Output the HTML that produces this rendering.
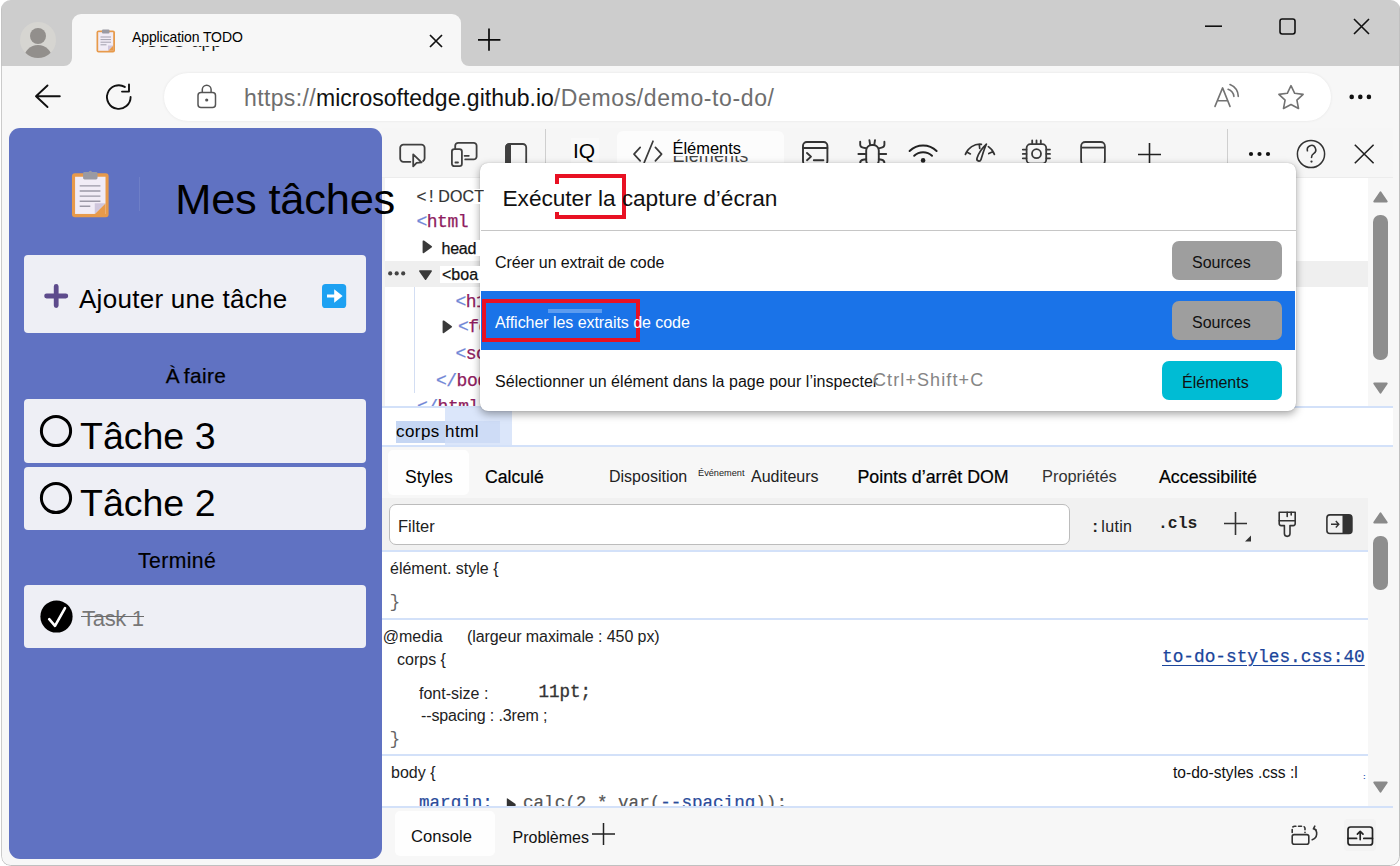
<!DOCTYPE html>
<html><head><meta charset="utf-8">
<style>
*{box-sizing:border-box;margin:0;padding:0}
html,body{width:1400px;height:866px;overflow:hidden;background:#fff;font-family:"Liberation Sans",sans-serif;color:#000}
#win{position:absolute;left:0;top:0;width:1400px;height:866px;background:#f7f7f7;clip-path:inset(0px 0px 0px 1.2px round 9.5px)}
#win>div,#win>span{position:absolute}
.t{position:absolute;white-space:nowrap;line-height:1}
svg{position:absolute;overflow:visible}
.card{background:#eeeff5;border-radius:4px}
.hl{height:2px;background:#d3e1f9}
.mono{font-family:"Liberation Mono",monospace}
</style></head><body>
<div id="win">
<!--frame-->
<div style="left:0;top:0;width:1400px;height:65.500px;background:#cdcdcd"></div>
<div style="left:72px;top:14.300px;width:389px;height:52px;background:#f7f7f7;border-radius:9px 9px 0 0"></div>
<svg style="left:64px;top:57.500px" width="8" height="8"><path d="M8 0 V8 H0 A8 8 0 0 0 8 0Z" fill="#f7f7f7"/></svg>
<svg style="left:461px;top:57.500px" width="8" height="8"><path d="M0 0 V8 H8 A8 8 0 0 1 0 0Z" fill="#f7f7f7"/></svg>
<!-- avatar -->
<svg style="left:20px;top:22px" width="36" height="36" viewBox="0 0 36 36"><defs><clipPath id="avc"><circle cx="18" cy="18" r="18"/></clipPath></defs><circle cx="18" cy="18" r="18" fill="#d6d5d1"/><g clip-path="url(#avc)" fill="#928f8c"><circle cx="18" cy="14" r="8"/><ellipse cx="18" cy="36.5" rx="14" ry="13.5"/></g></svg>
<!-- favicon clipboard -->
<svg style="left:96px;top:28.500px" width="20" height="24" viewBox="0 0 20 24"><rect x="0.5" y="1.5" width="18.5" height="22" rx="2" fill="#e79a4b"/><rect x="2.2" y="3.2" width="15" height="18.6" fill="#f1ecf6"/><path d="M17.2 16.5 V21.8 H12z" fill="#e79a4b"/><path d="M12 16.5h5.2L12 21.8z" fill="#cfc6dc"/><rect x="6" y="0.5" width="7.5" height="4" rx="1" fill="#9a9aa3"/><g stroke="#9b98a6" stroke-width="0.9"><path d="M4.5 8h10.5M4.5 10.6h10.5M4.5 13.2h10.5M4.5 15.8h6"/></g></svg>
<div class="t" style="left:134.500px;top:33.300px;font-size:17.600px;letter-spacing:.3px;color:#222">TODO app</div>
<div class="t" id="tabt" style="left:130px;top:27px;width:100px;height:18.700px;background:#f7f7f7;font-size:14px;letter-spacing:-.1px"><span style="position:absolute;left:2px;top:3px">Application TODO</span></div>
<svg style="left:429px;top:34px" width="14" height="14" viewBox="0 0 14 14"><path d="M1 1L13 13M13 1L1 13" stroke="#111" stroke-width="1.7"/></svg>
<svg style="left:477px;top:28px" width="24" height="24" viewBox="0 0 24 24"><path d="M12 .6V22.800M1 11.800H23.400" stroke="#0a0a0a" stroke-width="1.700"/></svg>
<!-- window controls -->
<svg style="left:1205px;top:25px" width="18" height="3"><path d="M0 1.2H17" stroke="#111" stroke-width="1.6"/></svg>
<svg style="left:1279px;top:18px" width="18" height="18"><rect x="1" y="1" width="15" height="15" rx="2.2" fill="none" stroke="#111" stroke-width="1.6"/></svg>
<svg style="left:1353px;top:18px" width="18" height="18"><path d="M1 1L16 16M16 1L1 16" stroke="#111" stroke-width="1.6"/></svg>
<!-- toolbar -->
<svg style="left:34px;top:84px" width="28" height="24" viewBox="0 0 28 24"><path d="M13.500 1.500L2 12.200L13.500 23M2 12.200H25.800" fill="none" stroke="#111" stroke-width="1.9" stroke-linecap="round" stroke-linejoin="round"/></svg>
<svg style="left:105px;top:83px" width="28" height="28" viewBox="0 0 28 28"><path d="M25.6 14 A11.8 11.8 0 1 1 19.8 3.9" fill="none" stroke="#111" stroke-width="1.9" stroke-linecap="round"/><path d="M24 1.5V8.6H17" fill="none" stroke="#111" stroke-width="1.9" stroke-linecap="round" stroke-linejoin="round"/></svg>
<div style="left:164px;top:73px;width:1167px;height:48px;border-radius:24px;background:#fff;box-shadow:0 0 3px rgba(0,0,0,.08)"></div>
<svg style="left:197px;top:84px" width="20" height="25" viewBox="0 0 20 25"><rect x="1" y="8.5" width="17.5" height="15" rx="3" fill="none" stroke="#555" stroke-width="1.5"/><path d="M5.3 8.5V5.6a4.4 4.4 0 0 1 8.8 0V8.5" fill="none" stroke="#555" stroke-width="1.5"/><circle cx="9.7" cy="16" r="1.6" fill="#555"/></svg>
<div class="t" id="url" style="left:244px;top:87px;font-size:23px;color:#6e6e6e"><span style="letter-spacing:.37px">https://</span><span style="color:#111">microsoftedge.github.io</span><span style="letter-spacing:.62px">/Demos/demo-to-do/</span></div>
<!-- read aloud -->
<svg style="left:1210px;top:80px" width="32" height="30" viewBox="0 0 32 30" fill="none" stroke="#737373" stroke-width="1.600" stroke-linecap="round" stroke-linejoin="round"><path d="M5 26.400L12.600 7.900L20 26.400M7.400 20.700H17.900"/><path d="M18.100 9.300A8.600 8.600 0 0 1 23.900 16.400M20 4.600A13.600 13.600 0 0 1 28.300 16.400"/></svg>
<svg style="left:1277px;top:84px" width="28" height="27" viewBox="0 0 28 27"><path d="M14 1.600l3.700 7.700 8.400 1.100-6.200 5.800 1.600 8.300L14 20.500 6.500 24.500l1.600-8.300-6.200-5.800 8.400-1.100z" fill="none" stroke="#737373" stroke-width="1.600" stroke-linejoin="round"/></svg>
<svg style="left:1349px;top:94px" width="24" height="6"><circle cx="2.700" cy="2.900" r="2.300" fill="#111"/><circle cx="11.300" cy="2.900" r="2.300" fill="#111"/><circle cx="19.900" cy="2.900" r="2.300" fill="#111"/></svg>
<!--page-->
<div style="left:9px;top:128px;width:373px;height:731px;background:#6072c2;border-radius:11px"></div>
<!-- big clipboard -->
<svg style="left:71.300px;top:170px" width="38.600" height="48.200" viewBox="0 0 40 50"><rect x="1" y="3.5" width="38" height="45.5" rx="3" fill="#e79a4b"/><rect x="4.2" y="7" width="31.6" height="38.6" fill="#f1ecf6"/><path d="M35.8 34.5V45.6H24.6z" fill="#e79a4b"/><path d="M24.6 34.5H35.8L24.6 45.6z" fill="#cfc6dc"/><rect x="12.5" y="2.2" width="15" height="7.6" rx="1.5" fill="#9a9aa3"/><circle cx="20" cy="2.6" r="1.8" fill="#9a9aa3"/><g stroke="#9b98a6" stroke-width="1.5"><path d="M9 16.5h21.5M9 21.8h21.5M9 27.1h21.5M9 32.4h21.5M9 37.7h11"/></g></svg>
<div style="left:139px;top:177px;width:1px;height:34px;background:#6e7fc7"></div>
<!-- add task -->
<div class="card" style="left:24px;top:255px;width:342px;height:78px"></div>
<svg style="left:44px;top:283.500px" width="24" height="24" viewBox="0 0 24 24"><path d="M12.200 2.400V21.600M2.600 12H21.800" stroke="#5d4b8c" stroke-width="4.800" stroke-linecap="round"/></svg>
<div class="t" id="add" style="left:79px;top:286px;font-size:26px;letter-spacing:.28px">Ajouter une tâche</div>
<svg style="left:322px;top:283.500px" width="24" height="24" viewBox="0 0 24 24"><rect x="0" y="0" width="24.200" height="24" rx="3.600" fill="#1da1f2"/><path d="M5 12H14" stroke="#fff" stroke-width="3"/><path d="M12.200 5.200L20.600 12L12.200 18.800z" fill="#fff"/></svg>
<div class="t" id="afaire" style="left:165.800px;top:366.400px;font-size:20.800px;letter-spacing:.4px;word-spacing:-2.400px;-webkit-text-stroke:.25px #000">À faire</div>
<div class="card" style="left:24px;top:399px;width:342px;height:64px"></div>
<svg style="left:39px;top:414px" width="34" height="34"><circle cx="17" cy="17" r="14.6" fill="none" stroke="#000" stroke-width="3"/></svg>
<div class="t" id="t3" style="left:80px;top:417.5px;font-size:37.5px;letter-spacing:0">Tâche 3</div>
<div class="card" style="left:24px;top:467px;width:342px;height:63px"></div>
<svg style="left:39px;top:481px" width="34" height="34"><circle cx="17" cy="17" r="14.6" fill="none" stroke="#000" stroke-width="3"/></svg>
<div class="t" id="t2" style="left:80px;top:484.5px;font-size:37.5px;letter-spacing:0">Tâche 2</div>
<div class="t" id="termine" style="left:138px;top:550px;font-size:21.2px;letter-spacing:.4px;-webkit-text-stroke:.2px #000">Terminé</div>
<div class="card" style="left:24px;top:585px;width:342px;height:63px"></div>
<svg style="left:39.5px;top:600px" width="33" height="33" viewBox="0 0 33 33"><circle cx="16.5" cy="16.5" r="16.1" fill="#000"/><path d="M9.2 19.2L15 25.8L25 8.2" fill="none" stroke="#fff" stroke-width="2.6" stroke-linecap="round" stroke-linejoin="round"/></svg>
<div class="t" id="t1" style="left:82px;top:608px;font-size:22px;color:#777;letter-spacing:-.3px">Task 1</div>
<div style="left:80.500px;top:615.800px;width:63px;height:1.600px;background:#6c6c6c"></div>
<!--dt-->
<div style="left:382px;top:128px;width:1011px;height:731px;background:#fff"></div>
<!-- toolbar -->
<div style="left:382px;top:128px;width:1011px;height:50px;background:#f6f6f6;border-bottom:1px solid #ececec"></div>
<svg style="left:399px;top:143px" width="28" height="26" viewBox="0 0 28 26" fill="none" stroke="#404040" stroke-width="1.800" stroke-linejoin="round" stroke-linecap="round"><path d="M11.400 18.800H4.400a3.200 3.200 0 0 1-3.200-3.200V4.800a3.200 3.200 0 0 1 3.200-3.200H22.400a3.200 3.200 0 0 1 3.200 3.200V15.200a3.200 3.200 0 0 1-1.600 2.900"/><path d="M14.200 11.400L22.600 19.400L17.600 19.900L14.200 23.400z"/></svg>
<svg style="left:451px;top:142px" width="28" height="26" viewBox="0 0 28 26" fill="none" stroke="#404040" stroke-width="1.800" stroke-linejoin="round" stroke-linecap="round"><path d="M4.200 7.200V3.800a3 3 0 0 1 3-3H22.600a3 3 0 0 1 3 3V14.400a3 3 0 0 1-3 3H14.200"/><rect x=".9" y="7.200" width="10" height="17" rx="2.400"/><path d="M4.400 20.500H7M13.600 13.800H17.800"/></svg>
<svg style="left:505px;top:142.500px" width="24" height="26" viewBox="0 0 24 26"><rect x="1" y="1" width="20.200" height="23" rx="3.400" fill="none" stroke="#404040" stroke-width="1.800"/><path d="M.2 4.400A3.800 3.800 0 0 1 4 .6H6V24.400H4A3.800 3.800 0 0 1 .2 20.600z" fill="#404040"/></svg>
<div style="left:545px;top:129px;width:1px;height:49px;background:#cfcfcf"></div>
<div style="left:571px;top:138px;width:28px;height:26px;background:#f9f9f9"></div>
<div class="t" id="iq" style="left:573px;top:140px;font-size:21px">IQ</div>
<div style="left:617px;top:131px;width:167px;height:47px;background:#fcfcfc;border-radius:6px 6px 0 0"></div>
<svg style="left:633px;top:140px" width="30" height="24" viewBox="0 0 30 24" fill="none" stroke="#3a3a3a" stroke-width="1.700" stroke-linecap="round" stroke-linejoin="round"><path d="M7.200 7.400L1 14.100L7.200 20.800M22.400 7.400L28.600 14.100L22.400 20.800M20 1.200L11.200 22.600"/></svg>
<div class="t" id="elg" style="left:672.500px;top:146.800px;font-size:18px;color:#444;letter-spacing:.1px">Eléments</div>
<div class="t" id="el" style="left:672.500px;top:139.500px;font-size:16.500px;background:#fcfcfc;height:16.100px;letter-spacing:-.05px;padding-right:8px">Éléments</div>
<!-- toolbar icons -->
<svg style="left:802px;top:141px" width="27" height="26" viewBox="0 0 27 26" fill="none" stroke="#333" stroke-width="1.900" stroke-linecap="round" stroke-linejoin="round"><rect x="1" y="1" width="24.400" height="23" rx="3.800"/><path d="M1 7H25.400M5 12L9 15.600L5 19.200M11.800 19.200H21.400"/></svg>
<svg style="left:858px;top:139px" width="29" height="30" viewBox="0 0 29 30" fill="none" stroke="#333" stroke-width="1.900" stroke-linecap="round" stroke-linejoin="round"><rect x="8.200" y="6" width="12.600" height="21" rx="5.600"/><path d="M11.400 1.200L12.100 5.600M17 1.200L16.300 5.600M2.200 2.800V5.800Q2.200 8 5 8.600L8.200 9.300M26.400 2.800V5.800Q26.400 8 23.600 8.600L20.800 9.300M0.400 15H8.200M20.800 15H28.200M8.200 20.200L5 20.800Q2.200 21.400 2.200 24V26M20.800 20.200L23.600 20.800Q26.400 21.400 26.400 24V26"/></svg>
<svg style="left:908px;top:142px" width="30" height="22" viewBox="0 0 30 22" fill="none" stroke="#222" stroke-width="2" stroke-linecap="round"><path d="M1.600 9A19.500 19.500 0 0 1 28.600 9M6.200 13.800A12.800 12.800 0 0 1 24 13.800"/><circle cx="15.100" cy="18.400" r="2.300" fill="#222" stroke="none"/></svg>
<svg style="left:964px;top:143px" width="33" height="22" viewBox="0 0 33 22" fill="none" stroke="#333" stroke-width="1.700" stroke-linecap="round" stroke-linejoin="round"><path d="M1.400 11.400A15.400 15.400 0 0 1 17.400 1.300M24.400 3.600A15.400 15.400 0 0 1 30.400 11.400M2.800 9L6.400 10.900M15.300 1.500L15.700 5.500M24.800 10.600L28.700 8.700"/><path d="M22.400 1.200C20.200 5.800 18.600 11.600 17 16.400C16 19.200 12.200 18 13 15.200C14.600 10.200 19.200 4.200 22.400 1.200z"/></svg>
<svg style="left:1021px;top:139px" width="31" height="30" viewBox="0 0 31 30" fill="none" stroke="#3a3a3a" stroke-width="1.800" stroke-linecap="round"><rect x="5.600" y="5.200" width="19.600" height="19.400" rx="3.800"/><circle cx="15.500" cy="14.700" r="4.500"/><path d="M11.200 4.800V1.400M15.500 4.800V1.400M19.800 4.800V1.400M5.400 10.600H1.800M5.400 14.900H1.800M5.400 19.300H1.800M25.400 10.600H29M25.400 14.900H29M25.400 19.300H29"/></svg>
<svg style="left:1080px;top:141px" width="27" height="26" viewBox="0 0 27 26" fill="none" stroke="#3a3a3a" stroke-width="1.800"><rect x="1.100" y="1" width="23.800" height="23" rx="4.200"/><path d="M1.100 6.600H24.900"/></svg>
<svg style="left:1138px;top:142.500px" width="23" height="23" viewBox="0 0 23 23"><path d="M11.5 0V23M0 11.5H23" stroke="#222" stroke-width="1.6"/></svg>
<div style="left:1227px;top:129px;width:1px;height:49px;background:#cfcfcf"></div>
<svg style="left:1248px;top:151px" width="24" height="6"><circle cx="3" cy="3" r="2.1" fill="#111"/><circle cx="11.5" cy="3" r="2.1" fill="#111"/><circle cx="20" cy="3" r="2.1" fill="#111"/></svg>
<svg style="left:1296px;top:139px" width="30" height="30" viewBox="0 0 30 30"><circle cx="15" cy="15" r="13.6" fill="none" stroke="#333" stroke-width="1.5"/></svg>
<svg style="left:1296px;top:139px" width="30" height="30" viewBox="0 0 30 30"><path d="M11.400 11.800A4.200 4.400 0 1 1 17.600 14.600Q15.500 16 15.500 18.400" fill="none" stroke="#333" stroke-width="1.600" stroke-linecap="round"/><circle cx="15.500" cy="22.600" r="1.150" fill="#333"/></svg>
<svg style="left:1353.500px;top:144px" width="21" height="21" viewBox="0 0 21 21"><path d="M.8 .800L19.600 19.200M19.600 .800L.800 19.200" stroke="#222" stroke-width="1.600"/></svg>
<!-- DOM tree -->
<div style="left:382px;top:178px;width:3px;height:229px;background:#f3f3f3"></div>
<div style="left:385px;top:261px;width:983px;height:25.500px;background:#efefef"></div>
<div class="t mono" style="left:416.5px;top:212.7px;font-size:18px;letter-spacing:-.5px;-webkit-text-stroke:.25px;"><span style="color:#6f86d6;-webkit-text-stroke-color:#6f86d6">&lt;</span><span style="color:#8f1d60;-webkit-text-stroke-color:#8f1d60">html</span></div>
<svg style="left:421px;top:240px" width="12" height="14"><path d="M1.6 1.4a.9.9 0 0 1 1.400-.8l7.600 5.500a.9.9 0 0 1 0 1.500l-7.600 5.500a.9.9 0 0 1-1.400-.8z" fill="#3a3a3a"/></svg>
<svg style="left:387.500px;top:271px" width="18" height="5"><circle cx="2.200" cy="2.400" r="2.100" fill="#444"/><circle cx="8.700" cy="2.400" r="2.100" fill="#444"/><circle cx="15.200" cy="2.400" r="2.100" fill="#444"/></svg>
<svg style="left:418px;top:270px" width="15" height="11"><path d="M1.200 1.600a.9.9 0 0 1 .8-1.300h11a.9.9 0 0 1 .8 1.300l-5.500 7.800a.9.9 0 0 1-1.500 0z" fill="#3a3a3a"/></svg>
<div style="left:414px;top:286.500px;width:1px;height:106px;background:#d3def3"></div>
<div class="t mono" style="left:455.5px;top:292.5px;font-size:18px;letter-spacing:-.5px;-webkit-text-stroke:.25px;"><span style="color:#6f86d6;-webkit-text-stroke-color:#6f86d6">&lt;</span><span style="color:#8f1d60;-webkit-text-stroke-color:#8f1d60">h1</span></div>
<svg style="left:440.500px;top:319.500px" width="12" height="14"><path d="M1.6 1.4a.9.9 0 0 1 1.400-.8l7.600 5.500a.9.9 0 0 1 0 1.500l-7.600 5.500a.9.9 0 0 1-1.400-.8z" fill="#3a3a3a"/></svg>
<div class="t mono" style="left:458px;top:318.2px;font-size:18px;letter-spacing:-.5px;-webkit-text-stroke:.25px;"><span style="color:#6f86d6;-webkit-text-stroke-color:#6f86d6">&lt;</span><span style="color:#8f1d60;-webkit-text-stroke-color:#8f1d60">fo</span></div>
<div class="t mono" style="left:455.5px;top:345.2px;font-size:18px;letter-spacing:-.5px;-webkit-text-stroke:.25px;"><span style="color:#6f86d6;-webkit-text-stroke-color:#6f86d6">&lt;</span><span style="color:#8f1d60;-webkit-text-stroke-color:#8f1d60">sc</span></div>
<div class="t mono" style="left:436px;top:371.7px;font-size:18px;letter-spacing:-.5px;-webkit-text-stroke:.25px;"><span style="color:#6f86d6;-webkit-text-stroke-color:#6f86d6">&lt;/</span><span style="color:#8f1d60;-webkit-text-stroke-color:#8f1d60">body</span></div>
<div class="t mono" style="left:417px;top:398.2px;font-size:18px;letter-spacing:-.5px;-webkit-text-stroke:.25px;height:9px;overflow:hidden"><span style="color:#6f86d6;-webkit-text-stroke-color:#6f86d6">&lt;/</span><span style="color:#8f1d60;-webkit-text-stroke-color:#8f1d60">html</span></div>
<!-- scrollbar 1 -->
<div style="left:1368px;top:178px;width:25px;height:229px;background:#f7f7f7"></div>
<svg style="left:1373px;top:191px" width="15" height="12"><path d="M7.500 1.200L13.800 10.600H1.200z" fill="#8a8a8a" stroke="#8a8a8a" stroke-width="1.800" stroke-linejoin="round"/></svg>
<div style="left:1373px;top:215px;width:14.500px;height:145px;border-radius:7px;background:#8e8e8e"></div>
<svg style="left:1373px;top:382px" width="15" height="12"><path d="M7.500 10.800L13.800 1.400H1.200z" fill="#8a8a8a" stroke="#8a8a8a" stroke-width="1.800" stroke-linejoin="round"/></svg>
<!-- breadcrumbs -->
<div class="hl" style="left:382px;top:406px;width:1011px"></div>
<div style="left:445px;top:408px;width:66.500px;height:37.500px;background:#dbe6fa"></div>
<div style="left:396px;top:421px;width:49px;height:21.500px;background:#c5d6f3"></div>
<div style="left:445px;top:421px;width:55px;height:21.500px;background:#cedcf6"></div>
<div class="t" id="crumb" style="left:396px;top:423px;font-size:17px;letter-spacing:.45px">corps html</div>
<div class="hl" style="left:382px;top:445px;width:1011px"></div>
<!--dt2-->
<!-- tabs row -->
<div style="left:382px;top:447px;width:1011px;height:51px;background:#f7f7f7"></div>
<div style="left:388px;top:450px;width:81px;height:45px;background:#fefefe;border-radius:5px"></div>
<div class="t tb" id="tb1" style="left:405px;top:469px;font-size:17.6px">Styles</div>
<div class="t tb" id="tb2" style="left:485px;top:469px;font-size:17.6px;-webkit-text-stroke:.22px #000">Calculé</div>
<div class="t tb" id="tb3" style="left:609px;top:469px;font-size:16px;color:#222">Disposition</div>
<div class="t tb" id="tb4" style="left:698px;top:468.800px;font-size:9.2px;color:#222">Événement</div>
<div class="t tb" id="tb5" style="left:751px;top:469px;font-size:16px;color:#222">Auditeurs</div>
<div class="t tb" id="tb6" style="left:857.500px;top:469px;font-size:17.800px;-webkit-text-stroke:.22px #000">Points d’arrêt DOM</div>
<div class="t tb" id="tb7" style="left:1042px;top:468px;font-size:16.4px;color:#333">Propriétés</div>
<div class="t tb" id="tb8" style="left:1159px;top:469px;font-size:17.800px;-webkit-text-stroke:.22px #000">Accessibilité</div>
<!-- filter row -->
<div style="left:382px;top:498px;width:986px;height:53px;background:#f1f1f1"></div>
<div style="left:1368px;top:498px;width:25px;height:309px;background:#f7f7f7"></div>
<div style="left:389px;top:504px;width:681px;height:41px;background:#fff;border:1px solid #bcbcbc;border-radius:7px"></div>
<div class="t" id="filter" style="left:398px;top:518px;font-size:16.5px;color:#222">Filter</div>
<div class="t" id="lutin" style="left:1092.500px;top:519px;font-size:16px;color:#222"><b style="letter-spacing:3.500px">:</b><span style="letter-spacing:.3px">lutin</span></div>
<div class="t mono" id="cls" style="left:1158px;top:516.3px;font-size:16.4px;font-weight:bold;color:#222">.cls</div>
<svg style="left:1224px;top:512px" width="30" height="30" viewBox="0 0 30 30"><path d="M11.500 0V23M0 11.500H23" stroke="#333" stroke-width="1.6"/><path d="M27 23.500V29.500H21z" fill="#333"/></svg>
<svg style="left:1277px;top:511px" width="21" height="27" viewBox="0 0 21 27" fill="none" stroke="#333" stroke-width="1.6" stroke-linejoin="round" stroke-linecap="round"><path d="M2.2 1.2H18.200V12.600a2 2 0 0 1-2 2H13V22.600a2.800 2.800 0 0 1-5.600 0V14.600H4.200a2 2 0 0 1-2-2z"/><path d="M2.2 9.8H18.200M10.200 1.200V5.400M14.200 1.200V4"/></svg>
<svg style="left:1326px;top:514px" width="27" height="21" viewBox="0 0 27 21"><rect x=".9" y=".9" width="25" height="18.600" rx="3" fill="none" stroke="#333" stroke-width="1.6"/><path d="M16.500 .9H23a3 3 0 0 1 3 3V16.500a3 3 0 0 1-3 3H16.500z" fill="#333"/><path d="M5 10.200H12.500M9.800 7L12.800 10.200L9.800 13.400" fill="none" stroke="#333" stroke-width="1.4"/></svg>
<div class="hl" style="left:382px;top:550px;width:986px"></div>
<!-- scrollbar 2 -->
<svg style="left:1373px;top:512px" width="15" height="12"><path d="M7.500 1.200L13.800 10.600H1.200z" fill="#8a8a8a" stroke="#8a8a8a" stroke-width="1.800" stroke-linejoin="round"/></svg>
<div style="left:1373px;top:536px;width:14.500px;height:54px;border-radius:7px;background:#8e8e8e"></div>
<svg style="left:1373px;top:781px" width="15" height="12"><path d="M7.500 10.800L13.800 1.400H1.200z" fill="#8a8a8a" stroke="#8a8a8a" stroke-width="1.800" stroke-linejoin="round"/></svg>
<!-- styles content -->
<div class="t" id="s1" style="left:390px;top:561px;font-size:16px;color:#222">élément. style {</div>
<div class="t mono" style="left:389.500px;top:592.500px;font-size:18px;color:#666">}</div>
<div class="hl" style="left:382px;top:617.600px;width:986px"></div>
<div class="t" id="s2" style="left:382.800px;top:629px;font-size:16px;color:#222">@media</div>
<div class="t" id="s3" style="left:467px;top:629px;font-size:16px;color:#222;letter-spacing:-.08px">(largeur maximale : 450 px)</div>
<div class="t" id="s4" style="left:397px;top:652px;font-size:16px;color:#222">corps {</div>
<div class="t mono" id="lnk" style="left:1162px;top:649px;font-size:17.800px;color:#1b459b;-webkit-text-stroke:.25px #1b459b;text-decoration:underline;text-underline-offset:3px">to-do-styles.css:40</div>
<div class="t" id="s5" style="left:419px;top:686px;font-size:16px;color:#222">font-size :</div>
<div class="t mono" id="s6" style="left:538.500px;top:684px;font-size:17.500px;color:#333;-webkit-text-stroke:.3px #333">11pt;</div>
<div class="t" id="s7" style="left:421px;top:708px;font-size:16px;color:#222;letter-spacing:-.14px">--spacing : .3rem ;</div>
<div class="t mono" style="left:389.500px;top:729.500px;font-size:18px;color:#666">}</div>
<div class="hl" style="left:382px;top:754px;width:986px"></div>
<div class="t" id="s8" style="left:391px;top:765px;font-size:16px;color:#222">body {</div>
<div class="t" id="s9" style="left:1173px;top:765px;font-size:15.600px;color:#111">to-do-styles .css :l</div>
<div class="t" style="left:1363px;top:773px;font-size:8px;color:#2d56b3;font-weight:bold">:</div>
<div class="t mono" id="s10" style="left:419px;top:795.300px;font-size:17.600px;height:10.700px;overflow:hidden;-webkit-text-stroke:.2px"><span style="color:#2a4b9b">margin:</span></div>
<div class="t mono" id="s11" style="left:523px;top:795.300px;font-size:17.600px;height:10.700px;overflow:hidden;color:#555;-webkit-text-stroke:.2px #555">calc(2 * var(<span style="color:#2a4b9b;-webkit-text-stroke-color:#2a4b9b">--spacing</span>));</div>
<svg style="left:506px;top:798.300px" width="11" height="8"><path d="M.8 .800Q.8 0 1.600 .400L9.600 6V8H.800z" fill="#333"/></svg>
<div class="hl" style="left:382px;top:806px;width:1011px"></div>
<!-- drawer -->
<div style="left:382px;top:808px;width:1011px;height:58px;background:#f7f7f7"></div>
<div style="left:395px;top:811px;width:100px;height:45px;background:#fefefe;border-radius:5px"></div>
<div class="t" id="d1" style="left:411px;top:829px;font-size:16.600px;color:#111">Console</div>
<div class="t" id="d2" style="left:512.500px;top:830px;font-size:16px;color:#111">Problèmes</div>
<svg style="left:592px;top:823px" width="23" height="23" viewBox="0 0 23 23"><path d="M11.500 0V22M0 11H23" stroke="#222" stroke-width="1.500"/></svg>
<div style="left:1344px;top:819px;width:32px;height:32px;background:#f3f3f3;border-radius:4px"></div>
<svg style="left:1291px;top:825px" width="29" height="22" viewBox="0 0 29 22" fill="none" stroke="#333" stroke-width="1.600" stroke-linecap="round" stroke-linejoin="round"><path d="M1.2 7.500V3.600A2.400 2.400 0 0 1 3.600 1.200H11.600A2.400 2.400 0 0 1 14 3.600V7.500" stroke-dasharray="3 2.600"/><rect x="1.200" y="9.600" width="16.600" height="9.600" rx="2"/><path d="M22.600 3.200A6.400 6.400 0 0 1 21.200 14.800M23.800 1.200L22.400 3.800L25.200 5"/></svg>
<svg style="left:1347px;top:826px" width="27" height="21" viewBox="0 0 27 21" fill="none" stroke="#222" stroke-width="1.700" stroke-linecap="round" stroke-linejoin="round"><rect x="1" y="1" width="24.500" height="18" rx="2.600"/><path d="M1 12.400H9.600M16.800 12.400H25.500M13.200 13.600V5.600M10.400 8.200L13.200 5.400L16 8.200"/></svg>
<!--popup-->
<div style="left:480px;top:163px;width:816px;height:248px;background:#fff;border-radius:8px;box-shadow:0 3px 8px rgba(0,0,0,.36),0 0 1px rgba(0,0,0,.3)"></div>
<div style="left:555px;top:174px;width:71px;height:45px;border:4.500px solid #e81123"></div>
<div style="left:500px;top:184px;width:120px;height:28px;background:#fff"></div>
<div class="t" id="ptitle" style="left:502.500px;top:187px;font-size:22.700px;color:#111;letter-spacing:-.05px">Exécuter la capture d’écran</div>
<div style="left:481px;top:230px;width:815px;height:1px;background:#c6c6c6"></div>
<div class="t" id="p1" style="left:495px;top:255px;font-size:16px;color:#111;letter-spacing:-.1px">Créer un extrait de code</div>
<div class="btn" style="left:1172px;top:241px;width:110px;height:39px;background:#9e9e9e;border-radius:7px"></div>
<div class="t" id="b1" style="left:1192px;top:255px;font-size:16px;color:#111">Sources</div>
<div style="left:481px;top:291px;width:814px;height:59px;background:#1a73e8"></div>
<div style="left:548px;top:309px;width:54px;height:3.500px;background:#5c9cf0"></div>
<div style="left:482px;top:299px;width:158px;height:43px;border:4.500px solid #e81123"></div>
<div class="t" id="p2" style="left:495px;top:315px;font-size:16px;color:#fff;letter-spacing:-.05px">Afficher les extraits de code</div>
<div class="btn" style="left:1172px;top:301px;width:110px;height:39px;background:#9e9e9e;border-radius:7px"></div>
<div class="t" id="b2" style="left:1192px;top:315px;font-size:16px;color:#111">Sources</div>
<div class="t" id="p3" style="left:495px;top:374px;font-size:16px;color:#111;letter-spacing:.03px">Sélectionner un élément dans la page pour l’inspecter</div>
<div class="t" id="p3k" style="left:873px;top:371px;font-size:18px;color:#858585;letter-spacing:1.100px">Ctrl+Shift+C</div>
<div class="btn" style="left:1162px;top:361px;width:120px;height:39px;background:#00bcd4;border-radius:7px"></div>
<div class="t" id="b3" style="left:1182px;top:375px;font-size:16px;color:#111">Éléments</div>
<div class="t" id="doct" style="left:415px;top:189px;width:68.500px;height:14.500px;overflow:hidden;background:#fff;font-size:16px;color:#333;-webkit-text-stroke:.2px #333"><span style="position:absolute;left:1.500px;top:-1px;font-size:17px">&lt;</span><span style="position:absolute;left:14px;top:-.5px">!</span><span style="position:absolute;left:23.300px;top:-.5px;letter-spacing:.1px">DOCTYPE</span></div>
<div class="t" id="head" style="left:439.500px;top:239.500px;width:40.500px;height:16.500px;overflow:hidden;background:#fff;font-size:16px;color:#111;-webkit-text-stroke:.25px #111;letter-spacing:-.25px"><span style="position:absolute;left:2px;top:1px">head</span></div>
<div class="t" id="boa" style="left:440px;top:265.500px;width:40px;height:17px;overflow:hidden;background:#fff;font-size:16px;color:#111;-webkit-text-stroke:.25px #111"><span style="position:absolute;left:2px;top:1.500px">&lt;boa</span></div>
<div class="t" id="h1" style="left:175.200px;top:178.200px;font-size:43.400px;letter-spacing:-.2px">Mes tâches</div>
<div style="left:1.200px;top:-3px;width:1398.800px;height:869px;border:1.400px solid #c0c0c0;border-radius:9.500px;pointer-events:none"></div>
</div>
</body></html>
